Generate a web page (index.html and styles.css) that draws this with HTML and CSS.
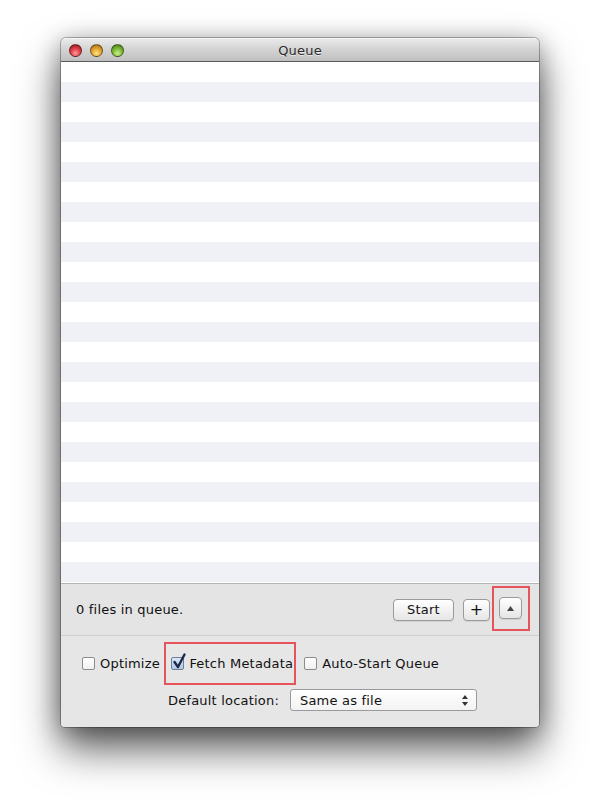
FILE: index.html
```html
<!DOCTYPE html>
<html>
<head>
<meta charset="utf-8">
<link rel="stylesheet" href="styles.css">
</head>
<body>
<div class="window">
  <div class="titlebar">
    <div class="lights">
      <span class="light red"></span>
      <span class="light yellow"></span>
      <span class="light green"></span>
    </div>
    <div class="title">Queue</div>
  </div>
  <div class="list">
    <div class="row"></div><div class="row alt"></div>
    <div class="row"></div><div class="row alt"></div>
    <div class="row"></div><div class="row alt"></div>
    <div class="row"></div><div class="row alt"></div>
    <div class="row"></div><div class="row alt"></div>
    <div class="row"></div><div class="row alt"></div>
    <div class="row"></div><div class="row alt"></div>
    <div class="row"></div><div class="row alt"></div>
    <div class="row"></div><div class="row alt"></div>
    <div class="row"></div><div class="row alt"></div>
    <div class="row"></div><div class="row alt"></div>
    <div class="row"></div><div class="row alt"></div>
    <div class="row"></div><div class="row alt"></div>
    <div class="row"></div>
  </div>
  <div class="statusbar">
    <span class="status">0 files in queue.</span>
    <div class="buttons">
      <button class="btn start">Start</button>
      <button class="btn plus">+</button>
      <div class="hl hl-btn"><button class="btn up"><svg width="7" height="5" viewBox="0 0 7 5"><path d="M3.5 0 L7 5 L0 5 Z" fill="#444"/></svg></button></div>
    </div>
  </div>
  <div class="options">
    <div class="checks">
      <label class="check"><span class="box"></span>Optimize</label>
      <div class="hl hl-check"><label class="check"><span class="box checked"><svg width="15" height="17" viewBox="0 0 15 17"><path d="M2.5 9 L6 14 L12.5 1.5" fill="none" stroke="#1b2a4a" stroke-width="2.4" stroke-linecap="round" stroke-linejoin="round"/></svg></span>Fetch Metadata</label></div>
      <label class="check auto"><span class="box"></span>Auto-Start Queue</label>
    </div>
    <div class="location">
      <span class="loc-label">Default location:</span>
      <div class="select"><span>Same as file</span><svg class="arrows" width="6" height="11" viewBox="0 0 6 11"><path d="M3 0 L6 4 L0 4 Z M3 11 L6 7 L0 7 Z" fill="#333"/></svg></div>
    </div>
  </div>
</div>
</body>
</html>
```
FILE: styles.css
```css
html, body {
  margin: 0;
  padding: 0;
  background: #fff;
}
body {
  width: 600px;
  height: 812px;
  padding: 38px 0 0 61px;
  box-sizing: border-box;
  font-family: "DejaVu Sans", "Lucida Grande", sans-serif;
  font-size: 13px;
  letter-spacing: 0.2px;
  color: #111;
}
.window {
  width: 478px;
  height: 689px;
  background: #e6e6e6;
  border-radius: 5px 5px 4px 4px;
  box-shadow: 0 0 0 1px rgba(0,0,0,0.28), 0 22px 42px rgba(0,0,0,0.62), 0 4px 24px rgba(0,0,0,0.32);
  display: flex;
  flex-direction: column;
  overflow: hidden;
}
.titlebar {
  height: 22px;
  flex: none;
  background: linear-gradient(#eaeaea, #d6d6d6 40%, #bfbfbf);
  border-top: 1px solid #f6f6f6;
  border-bottom: 1px solid #5a5a5a;
  display: flex;
  align-items: center;
  position: relative;
}
.lights {
  display: flex;
  gap: 8px;
  padding-left: 8px;
}
.light {
  width: 13px;
  height: 13px;
  border-radius: 50%;
  box-sizing: border-box;
  border: 1px solid rgba(0,0,0,0.45);
}
.red { background: radial-gradient(circle at 50% 75%, #ff9a98 0, #e0434c 45%, #8f1017 100%); }
.yellow { background: radial-gradient(circle at 50% 75%, #ffe58a 0, #e4a632 45%, #9c6410 100%); }
.green { background: radial-gradient(circle at 50% 75%, #cff18d 0, #7fbc3b 45%, #3b7a12 100%); }
.title {
  position: absolute;
  left: 0;
  right: 0;
  text-align: center;
  font-size: 13px;
  color: #2b2b2b;
  text-shadow: 0 1px 0 rgba(255,255,255,0.6);
}
.list {
  flex: none;
  height: 521px;
  background: #fff;
  overflow: hidden;
  border-bottom: 1px solid #b5b5b5;
}
.row {
  height: 20px;
}
.row.alt {
  background: #eff1f7;
}
.statusbar {
  flex: none;
  height: 51px;
  display: flex;
  align-items: center;
  justify-content: space-between;
  padding: 0 9px 0 15px;
  background: #e4e4e4;
  border-bottom: 1px solid #cfcfcf;
}
.buttons {
  display: flex;
  align-items: center;
}
.btn {
  height: 22px;
  font-family: inherit;
  font-size: 13px;
  letter-spacing: 0.2px;
  color: #111;
  background: linear-gradient(#ffffff, #f2f2f2 50%, #e6e6e6);
  border: 1px solid #9a9a9a;
  border-radius: 4px;
  box-shadow: 0 1px 0 rgba(0,0,0,0.08);
  padding: 0;
  display: flex;
  align-items: center;
  justify-content: center;
}
.start { width: 61px; margin-right: 9px; }
.plus { width: 27px; font-size: 16px; margin-right: 2px; }
.up { width: 23px; }
.hl {
  border: 2.5px solid #e4545a;
  box-sizing: border-box;
}
.hl-btn {
  width: 38px;
  height: 45px;
  display: flex;
  align-items: center;
  padding-left: 4.5px;
  margin-top: -3px;
}
.options {
  flex: 1;
  background: #e6e6e6;
  display: flex;
  flex-direction: column;
  padding: 6px 0 0 21px;
}
.checks {
  display: flex;
  align-items: center;
  height: 43px;
}
.check {
  display: flex;
  align-items: center;
  gap: 5px;
}
.box {
  width: 13px;
  height: 13px;
  box-sizing: border-box;
  border: 1px solid #8c8c8c;
  border-radius: 2px;
  background: linear-gradient(#ffffff, #f0f0f0);
  position: relative;
}
.box.checked {
  background: linear-gradient(#d9e6f5, #b2c8e4);
  border-color: #6d7f99;
}
.box svg {
  position: absolute;
  left: 0;
  top: -5px;
}
.hl-check {
  height: 43px;
  display: flex;
  align-items: center;
  margin-left: 4px;
  padding: 0 1px 0 5.5px;
}
.auto {
  margin-left: 8px;
}
.location {
  display: flex;
  align-items: center;
  gap: 11px;
  margin-left: 86px;
  margin-top: 4px;
}
.select {
  width: 187px;
  height: 22px;
  box-sizing: border-box;
  border: 1px solid #9a9a9a;
  border-radius: 3px;
  background: linear-gradient(#ffffff, #f3f3f3);
  display: flex;
  align-items: center;
  justify-content: space-between;
  padding: 0 8px 0 9px;
}
```
